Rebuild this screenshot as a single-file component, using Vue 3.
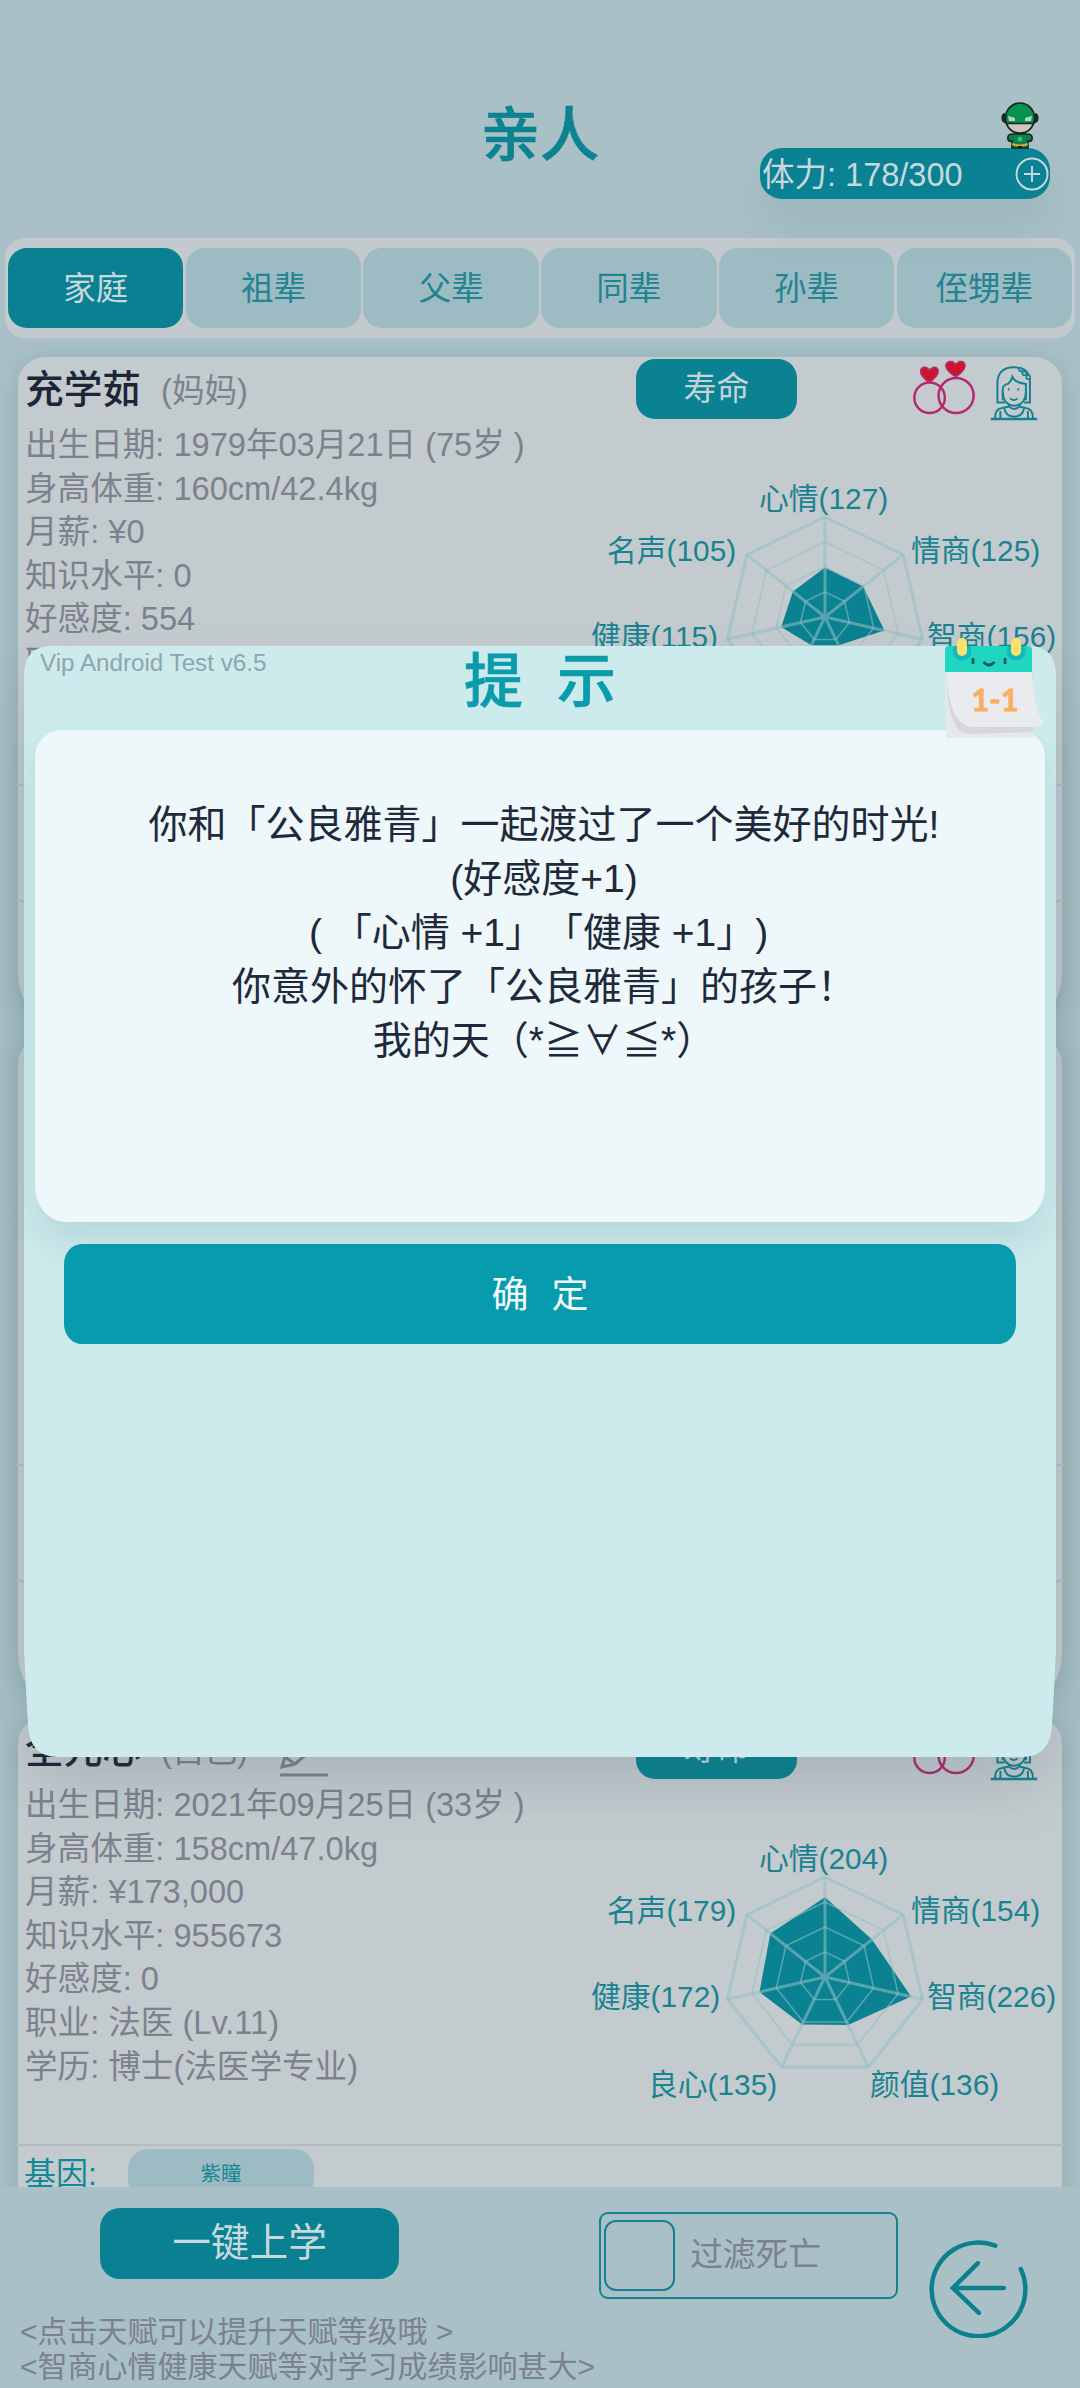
<script setup>
const tabs = ['家庭', '祖辈', '父辈', '同辈', '孙辈', '侄甥辈']

const CX = 233
const CY = 118
const MAX = 256

function point(i, r) {
  const a = (i * 2 * Math.PI) / 7
  return `${(CX + r * Math.sin(a)).toFixed(1)},${(CY - r * Math.cos(a)).toFixed(1)}`
}
const ring = (r) => [0, 1, 2, 3, 4, 5, 6].map((i) => point(i, r)).join(' ')
const shape = (stats) => stats.map((v, i) => point(i, (v / MAX) * 100)).join(' ')
const spokes = [0, 1, 2, 3, 4, 5, 6].map((i) => `M${CX},${CY} L${point(i, 100)}`).join(' ')

const labels = [
  { name: '心情', x: 167, y: 10 },
  { name: '情商', x: 319, y: 62 },
  { name: '智商', x: 335, y: 147.5 },
  { name: '颜值', x: 278, y: 236 },
  { name: '良心', x: 56, y: 236 },
  { name: '健康', x: -1, y: 147.5 },
  { name: '名声', x: 15, y: 62 },
]

const people = [
  {
    name: '充学茹',
    role: '妈妈',
    lines: ['出生日期: 1979年03月21日 (75岁 )', '身高体重: 160cm/42.4kg', '月薪: ¥0', '知识水平: 0', '好感度: 554', '职业: 无', '学历: 无'],
    stats: [127, 125, 156, 80, 80, 115, 105],
    gene: '',
  },
  {
    name: '',
    role: '',
    lines: [],
    stats: null,
    gene: '',
  },
  {
    name: '全元心',
    role: '自己',
    self: true,
    lines: ['出生日期: 2021年09月25日 (33岁 )', '身高体重: 158cm/47.0kg', '月薪: ¥173,000', '知识水平: 955673', '好感度: 0', '职业: 法医 (Lv.11)', '学历: 博士(法医学专业)'],
    stats: [204, 154, 226, 136, 135, 172, 179],
    gene: '紫瞳',
  },
]

const message = [
  '你和「公良雅青」一起渡过了一个美好的时光!',
  '(好感度+1)',
  '( 「心情 +1」「健康 +1」) ',
  '你意外的怀了「公良雅青」的孩子！',
]
</script>

<template>
  <div class="screen">
    <header class="header">
      <h1 class="title">亲人</h1>
      <div class="energy">
        <span>体力: 178/300</span>
        <svg class="plus" viewBox="0 0 34 34"><circle cx="17" cy="17" r="15.5" /><path d="M17 9v16M9 17h16" /></svg>
        <svg class="hero" viewBox="0 0 38 47">
          <g stroke="#15251f" stroke-width="1.6">
            <path d="M12 32 Q6 32 7 37 Q7 40 11 39 L11 46 H27 L27 39 Q31 40 31 37 Q32 32 26 32Z" fill="#0a8250" />
            <path d="M3 12 Q0 14 2 19 L5 21 V13Z" fill="#1d2b2a" />
            <path d="M35 12 Q38 14 36 19 L33 21 V13Z" fill="#1d2b2a" />
            <ellipse cx="19" cy="16" rx="14.5" ry="15" fill="#06934f" />
            <path d="M5.5 21.500 H32.500 Q29 31 19 31 Q9 31 5.500 21.500Z" fill="#d2c4bd" />
          </g>
          <path d="M7 14 L14 16 V19 H8Z M31 14 L24 16 V19 H30Z" fill="#b9d2c5" />
          <path d="M11 42 Q19 45 27 42" stroke="#c8ae2c" stroke-width="2" fill="none" />
          <circle cx="19" cy="37" r="2.500" fill="#3fb97c" />
          <path d="M17 45h4" stroke="#15251f" stroke-width="2" />
        </svg>
      </div>
    </header>

    <nav class="tabs">
      <button v-for="(t, i) in tabs" :key="t" class="tab" :class="{ active: i === 0 }">{{ t }}</button>
    </nav>

    <main class="list">
      <section v-for="(p, n) in people" :key="n" class="card">
        <div class="top">
          <template v-if="p.stats">
            <div class="info">
              <div class="name-row">
                <span class="name">{{ p.name }}</span>
                <span class="role">({{ p.role }})</span>
                <svg v-if="p.self" class="pencil" viewBox="0 0 48 48">
                  <path d="M2 37 L5 27 L32 3 L41 12 L15 34 Z M5 27 L15 34 M0 45 H48" />
                </svg>
              </div>
              <div v-for="l in p.lines" :key="l" class="line">{{ l }}</div>
            </div>
            <div class="side">
              <div class="actions">
                <button class="life">寿命</button>
                <svg class="rings" viewBox="100 60 190 166">
                  <g fill="none" stroke="#b5296f" stroke-width="7.5">
                    <circle cx="150" cy="174" r="46" />
                    <circle cx="230" cy="167" r="53" />
                  </g>
                  <g fill="#c9162c" stroke="#b5296f" stroke-width="5">
                    <path d="M149 127 Q122 108 123 93 Q126 80 140 83 L150 90 L160 83 Q174 80 176 93 Q176 108 149 127Z" />
                    <path d="M229 111 Q199 92 199 76 Q203 62 219 65 L229 73 L239 65 Q254 62 257 76 Q257 92 229 111Z" />
                  </g>
                </svg>
                <svg class="girl" viewBox="328 80 144 166">
                  <g fill="none" stroke="#17818f" stroke-width="6">
                    <path d="M372 190 H350 V128 Q353 84 400 84 Q448 84 448 128 V190 H430" />
                    <path d="M366 183 V150 Q366 137 382 134 Q392 126 395 113 Q402 130 436 134 V183" />
                    <path d="M366 160 Q368 198 400 200 Q434 198 436 160" />
                    <path d="M385 195 V202 Q400 218 416 202 V195" />
                    <path d="M343 240 Q341 210 365 207 L385 202 M457 240 Q459 210 435 207 L416 202" />
                    <path d="M371 208 Q374 232 400 233 Q427 232 430 208 M359 216 V238 M442 216 V238" />
                    <path d="M330 240 H470" stroke-width="7" />
                    <path d="M388 178 Q400 188 411 178" stroke-width="5" />
                    <path d="M384 147v7M413 147v7" stroke-width="5" />
                  </g>
                  <g fill="#b8ced2" stroke="#17818f" stroke-width="5">
                    <circle cx="420" cy="91" r="5" /><circle cx="431" cy="102" r="6" /><circle cx="443" cy="114" r="6" />
                  </g>
                </svg>
              </div>
              <svg class="radar" viewBox="0 0 470 250">
                <polygon :points="shape(p.stats)" fill="#0b8292" />
                <g class="grid">
                  <polygon :points="ring(25)" />
                  <polygon :points="ring(50)" />
                  <polygon :points="ring(75)" />
                  <polygon :points="ring(100)" class="bold" />
                  <path :d="spokes" class="bold" />
                </g>
                <text v-for="(l, i) in labels" :key="l.name" :x="l.x" :y="l.y">{{ l.name }}({{ p.stats[i] }})</text>
              </svg>
            </div>
          </template>
        </div>
        <div class="gene">
          <template v-if="p.gene">
            <span class="gene-label">基因:</span>
            <span class="chip">{{ p.gene }}</span>
          </template>
        </div>
      </section>
    </main>

    <footer class="footer">
      <div class="controls">
        <button class="study">一键上学</button>
        <label class="filter"><i class="box"></i><span>过滤死亡</span></label>
        <svg class="back" viewBox="0 0 100 100">
          <path d="M67.500 7.500 A47 47 0 1 0 93 31 M76 50 H25 M50 25 L25 50 L51 75" />
        </svg>
      </div>
      <p class="tips">&lt;点击天赋可以提升天赋等级哦 &gt;<br />&lt;智商心情健康天赋等对学习成绩影响甚大&gt;</p>
    </footer>

    <div class="modal">
      <svg class="modal-bg" viewBox="0 0 1032 1111">
        <path d="M0 27 Q2 0 27 0 H1005 Q1030 0 1032 27 V1005 L1028 1080 Q1026 1111 998 1111 H34 Q6 1111 4 1080 L0 1005Z" />
      </svg>
      <div class="modal-head">
        <span class="version">Vip Android Test v6.5</span>
        <h2 class="modal-title"><span>提</span><span>示</span></h2>
      </div>
      <div class="panel">
        <p v-for="m in message" :key="m">{{ m }}</p>
        <p>我的天（*<span class="cjk">≧∀≦</span>*）</p>
      </div>
      <button class="ok"><span>确</span><span>定</span></button>
      <svg class="calendar" viewBox="0 0 100 102">
        <path d="M0 34 H88 V101 H1Z" fill="#e6e9ea" />
        <path d="M1 34 Q2 97 24 97 L88 95 L88 34Z" fill="#d5d7da" />
        <path d="M1 35 H87 Q89 74 98 84 Q99 89 92 90 H25 Q4 86 1 35Z" fill="#eaebee" />
        <path d="M0 35 V13 Q0 9 4 9 H83 Q87 9 87 13 V35Z" fill="#21d6c0" />
        <path d="M9 9 A9.500 9.500 0 1 0 25 9Z M63 9 A9.500 9.500 0 1 0 79 9Z" fill="#13b9bf" />
        <rect x="12" y="1" width="10" height="18" rx="5" fill="#fbe36b" />
        <rect x="66" y="1" width="10" height="18" rx="5" fill="#fbe36b" />
        <path d="M28 21v6M60 21v6M38.500 25 Q44 31 49.500 25" fill="none" stroke="#1c5a5c" stroke-width="2.800" />
        <text x="50" y="74" text-anchor="middle">1-1</text>
      </svg>
    </div>
  </div>
</template>

<style>
body {
  margin: 0;
}
</style>

<style scoped>
.screen {
  position: relative;
  width: 1080px;
  height: 2388px;
  overflow: hidden;
  display: flex;
  flex-direction: column;
  background: #a8c0c6;
  font-family: "Liberation Sans", "Noto Sans CJK SC", sans-serif;
  text-spacing-trim: space-all;
  color: #7b828d;
}
.screen * {
  box-sizing: border-box;
}
button {
  border: 0;
  padding: 0;
  font: inherit;
}
h1,
h2,
p {
  margin: 0;
}
svg {
  display: block;
}
.header {
  height: 238px;
  position: relative;
  display: flex;
  justify-content: center;
}
.title {
  margin-top: 94px;
  height: 84px;
  line-height: 84px;
  font-size: 59px;
  font-weight: 500;
  -webkit-text-stroke: 0.7px #0c8292;
  color: #0c8292;
}
.energy {
  position: absolute;
  left: 760px;
  top: 148px;
  width: 290px;
  height: 51px;
  padding: 0 1px 0 2px;
  border-radius: 22px;
  background: #0a8293;
  color: #c8d8dd;
  font-size: 32.500px;
  display: flex;
  align-items: center;
  justify-content: space-between;
  box-shadow: 0 26px 40px rgba(60, 90, 100, 0.1);
}
.energy span {
  margin-top: -5px;
}
.plus {
  width: 34px;
  height: 34px;
  fill: none;
  stroke: #c8d8dd;
  stroke-width: 2;
}
.hero {
  position: absolute;
  left: 241px;
  top: -46px;
  width: 38px;
  height: 47px;
}
.tabs {
  margin: 0 5px;
  height: 100px;
  flex: none;
  padding: 0 3px;
  display: flex;
  align-items: center;
  gap: 2.4px;
  border-radius: 20px;
  background: #c3cace;
}
.tab {
  flex: 1;
  height: 80px;
  padding-bottom: 5px;
  border-radius: 19px;
  background: #9dbbc3;
  color: #238391;
  font-size: 32.500px;
}
.tab.active {
  background: #0a8192;
  color: #c8d8dd;
}
.list {
  flex: none;
  height: 1849px;
  padding: 19px 18px 0;
  overflow: hidden;
  display: flex;
  flex-direction: column;
  gap: 20px;
}
.card {
  flex: none;
  height: 660px;
  border-radius: 28px 28px 28px 28px / 26px 26px 44px 44px;
  background: #c4cbcf;
  box-shadow: 0 4px 22px rgba(50, 85, 95, 0.2);
}
.top {
  height: 429px;
  margin: 0 -2px;
  padding: 0 2px;
  display: flex;
  border-bottom: 2px solid #b3bcc1;
}
.info {
  width: 574px;
  padding-left: 7px;
}
.name-row {
  height: 66px;
  padding-bottom: 9px;
  display: flex;
  align-items: center;
  white-space: nowrap;
}
.name {
  font-size: 38.700px;
  font-weight: 500;
  color: #1d2637;
}
.role {
  margin: 4px 0 0 20px;
  font-size: 32.600px;
}
.pencil {
  margin: 16px 0 0 32px;
  width: 48px;
  height: 48px;
  fill: none;
  stroke: #7b828d;
  stroke-width: 3;
}
.line {
  height: 43.600px;
  line-height: 43.600px;
  font-size: 32.600px;
  white-space: pre;
}
.side {
  width: 470px;
}
.actions {
  height: 142px;
  display: flex;
  align-items: flex-start;
}
.life {
  margin: 2px 0 0 44px;
  width: 161px;
  height: 60px;
  padding-bottom: 6px;
  border-radius: 19px;
  background: #0b8292;
  color: #c3d3d9;
  font-size: 33px;
}
.rings {
  margin: 3px 0 0 116px;
  width: 63px;
  height: 55px;
}
.girl {
  margin: 9px 0 0 14px;
  width: 48px;
  height: 55px;
}
.radar {
  width: 470px;
  height: 250px;
  overflow: visible;
}
.radar text {
  font-size: 29.800px;
  fill: #1a8390;
}
.grid {
  fill: none;
  stroke: rgba(145, 190, 196, 0.56);
  stroke-width: 1.6;
}
.grid .bold {
  stroke-width: 3;
}
.gene {
  height: 116px;
  margin: 0 -2px;
  padding: 3px 8px 0;
  display: flex;
  align-items: flex-start;
  border-bottom: 2px solid #b3bcc1;
}
.gene-label {
  width: 104px;
  line-height: 50px;
  font-size: 32px;
  color: #138896;
}
.chip {
  width: 186px;
  height: 50px;
  border-radius: 20px;
  background: #9dbbc3;
  color: #138896;
  font-size: 20.500px;
  line-height: 50px;
  text-align: center;
}
.footer {
  flex: 1;
}
.controls {
  height: 128px;
  padding: 21px 52px 0 100px;
  display: flex;
  align-items: flex-start;
}
.study {
  width: 300px;
  height: 71px;
  padding-bottom: 9px;
  border-radius: 20px;
  background: #0a8192;
  color: #c8d8dd;
  font-size: 38.700px;
}
.filter {
  margin: 4px 0 0 200px;
  width: 300px;
  height: 87px;
  padding: 0 3px;
  border: 2px solid #15828f;
  border-radius: 9px;
  display: flex;
  align-items: center;
  font-size: 32.700px;
}
.filter span {
  margin-top: -9px;
}
.box {
  width: 71px;
  height: 71px;
  margin-right: 15px;
  border: 2px solid #15828f;
  border-radius: 12px;
}
.back {
  margin: 30px 0 0 30px;
  width: 100px;
  height: 100px;
  fill: none;
  stroke: #0d8090;
  stroke-width: 4.500;
  stroke-linecap: round;
}
.tips {
  padding-left: 20px;
  font-size: 30px;
  line-height: 34.500px;
}
.modal {
  position: absolute;
  left: 24px;
  top: 646px;
  width: 1032px;
  height: 1111px;
  display: flex;
  flex-direction: column;
}
.modal-bg {
  position: absolute;
  inset: 0;
  width: 1032px;
  height: 1111px;
  overflow: visible;
  fill: #cdebed;
  filter: drop-shadow(0 30px 28px rgba(40, 75, 85, 0.16));
}
.modal-head,
.panel,
.ok {
  position: relative;
}
.modal-head {
  height: 84px;
  display: flex;
  justify-content: center;
}
.version {
  position: absolute;
  left: 16px;
  top: 3px;
  font-size: 24.200px;
  line-height: 28px;
  color: #8ea6ab;
}
.modal-title {
  display: flex;
  gap: 34px;
  font-size: 59px;
  line-height: 72px;
  font-weight: 500;
  color: #0b9cac;
  -webkit-text-stroke: 0.7px #0b9cac;
}
.panel {
  margin: 0 11px;
  height: 492px;
  padding: 68px 0 0 8px;
  border-radius: 28px 28px 30px 30px / 26px 26px 36px 36px;
  background: #eef7f9;
  box-shadow: 0 20px 36px rgba(60, 100, 105, 0.14);
  font-size: 39px;
  line-height: 54px;
  text-align: center;
  color: #20293a;
  white-space: pre;
}
.panel p {
  height: 54px;
}
.cjk {
  font-family: "Noto Sans CJK SC", sans-serif;
  line-height: 1;
}
.ok {
  margin: 22px 40px 0;
  height: 100px;
  padding-bottom: 4px;
  border-radius: 18px / 20px;
  background: #079bad;
  color: #f2fbfc;
  font-size: 37px;
  display: flex;
  align-items: center;
  justify-content: center;
  gap: 23px;
}
.calendar {
  position: absolute;
  left: 921px;
  top: -9px;
  width: 100px;
  height: 102px;
}
.calendar text {
  font-family: Lato, sans-serif;
  font-weight: 700;
  font-size: 31px;
  fill: #f9af60;
  stroke: #f9af60;
  stroke-width: 0.8px;
}
</style>
